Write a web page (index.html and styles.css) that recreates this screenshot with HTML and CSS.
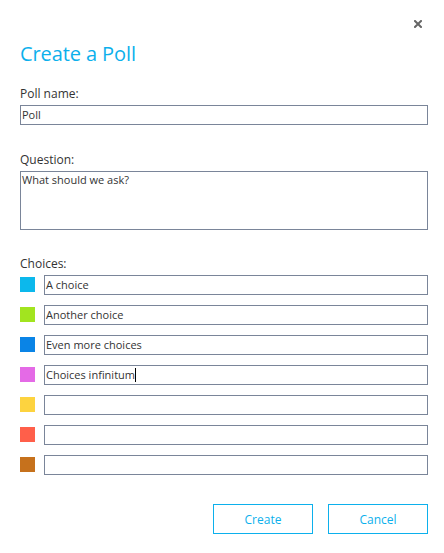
FILE: index.html
```html
<!DOCTYPE html>
<html>
<head>
<meta charset="utf-8">
<link rel="stylesheet" href="styles.css">
</head>
<body>
<div class="dialog">
  <div class="topbar">
    <span class="close" aria-label="Close">
      <svg width="8" height="8" viewBox="0 0 8 8"><path d="M1 1L7 7M7 1L1 7" stroke="#666" stroke-width="2" stroke-linecap="square"/></svg>
    </span>
  </div>
  <h1 class="title">Create a Poll</h1>
  <div class="label first">Poll name:</div>
  <div class="field">Poll</div>
  <div class="label">Question:</div>
  <div class="field area">What should we ask?</div>
  <div class="label choices-label">Choices:</div>
  <div class="choices">
    <div class="row"><span class="swatch c1"></span><div class="field">A choice</div></div>
    <div class="row"><span class="swatch c2"></span><div class="field">Another choice</div></div>
    <div class="row"><span class="swatch c3"></span><div class="field">Even more choices</div></div>
    <div class="row"><span class="swatch c4"></span><div class="field">Choices infinitum<span class="caret"></span></div></div>
    <div class="row"><span class="swatch c5"></span><div class="field"></div></div>
    <div class="row"><span class="swatch c6"></span><div class="field"></div></div>
    <div class="row"><span class="swatch c7"></span><div class="field"></div></div>
  </div>
  <div class="actions">
    <button class="btn">Create</button>
    <button class="btn">Cancel</button>
  </div>
</div>
</body>
</html>
```
FILE: styles.css
```css
html, body {
  margin: 0;
  padding: 0;
  background: #fff;
}
body {
  font-family: "Open Sans", "Liberation Sans", sans-serif;
  color: #333;
}
.dialog {
  width: 408px;
  padding: 0 16px 0 20px;
}
.topbar {
  display: flex;
  justify-content: flex-end;
  padding-top: 20px;
  padding-right: 6px;
  height: 8px;
}
.close {
  display: block;
  width: 8px;
  height: 8px;
}
.close svg { display: block; }
.title {
  margin: 12px 0 0 0;
  font-size: 20px;
  font-weight: 400;
  line-height: 28px;
  color: #0cb0ec;
  letter-spacing: -0.1px;
}
.label {
  font-size: 12px;
  line-height: 16px;
  margin-top: 27px;
  margin-bottom: 3px;
}
.label.first {
  margin-top: 18px;
}
.label.choices-label {
  margin-top: 26px;
  margin-bottom: 3px;
}
.field {
  box-sizing: border-box;
  height: 20px;
  border: 1px solid #7a8599;
  font-size: 11px;
  line-height: 18px;
  padding-left: 1px;
  color: #333;
  white-space: nowrap;
}
.field.area {
  height: 59px;
  line-height: 16px;
}
.choices {
  display: flex;
  flex-direction: column;
  gap: 10px;
}
.row {
  display: flex;
  align-items: flex-start;
  gap: 9px;
}
.row .field {
  flex: 1;
}
.swatch {
  width: 15px;
  height: 15px;
  margin-top: 2px;
  flex: none;
}
.c1 { background: #0cb8ec; }
.c2 { background: #a2e41f; }
.c3 { background: #0a84e6; }
.c4 { background: #e46ae6; }
.c5 { background: #fdd33f; }
.c6 { background: #ff5f4a; }
.c7 { background: #c6711c; }
.caret {
  display: inline-block;
  width: 1px;
  height: 14px;
  background: #000;
  vertical-align: -3px;
}
.actions {
  display: flex;
  justify-content: flex-end;
  gap: 15px;
  margin-top: 29px;
}
.btn {
  box-sizing: border-box;
  width: 100px;
  height: 30px;
  background: #fff;
  border: 1px solid #0cb0ec;
  color: #0cb0ec;
  font-family: "Open Sans", "Liberation Sans", sans-serif;
  font-size: 12px;
  padding: 0;
}
```
